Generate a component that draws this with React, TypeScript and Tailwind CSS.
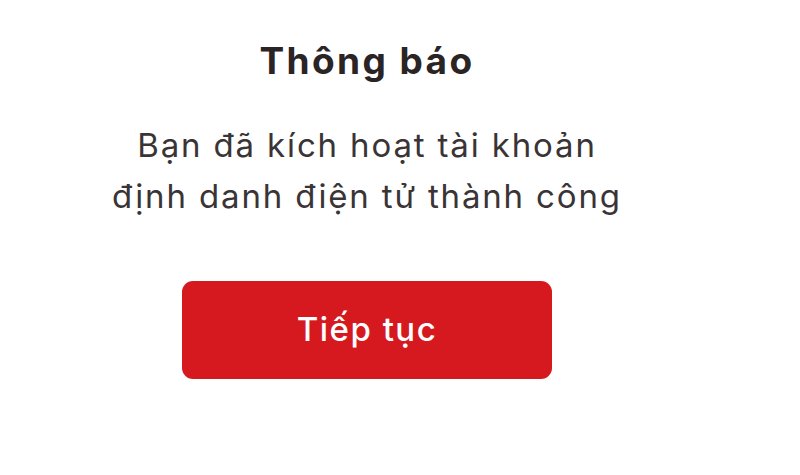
export default function App() {
  return (
    <div className="w-[800px] h-[475px] bg-white overflow-hidden" style={{ fontFamily: 'Inter, "Noto Sans", sans-serif' }}>
      <div className="w-[734px] flex flex-col items-center pt-[39px]">
        <h1 className="text-[37px] leading-[44px] font-bold text-[#2a2425] tracking-[2.4px]">Thông báo</h1>
        <p className="mt-[37px] text-[33px] leading-[51px] text-[#3a3436] text-center tracking-[1.85px]">
          Bạn đã kích hoạt tài khoản
          <br />
          định danh điện tử thành công
        </p>
        <button className="mt-[59px] w-[370px] h-[98px] rounded-[11px] bg-[#d6191f] text-white text-[33px] font-medium tracking-[1.5px] flex items-center justify-center">
          Tiếp tục
        </button>
      </div>
    </div>
  );
}
